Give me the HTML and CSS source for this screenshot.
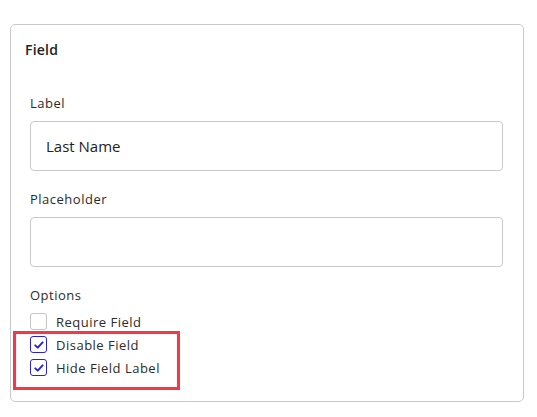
FILE: index.html
```html
<!DOCTYPE html>
<html lang="en">
<head>
<meta charset="utf-8">
<title>Field</title>
<link rel="stylesheet" href="styles.css">
</head>
<body>
<section class="card">
  <h2 class="card-title">Field</h2>
  <div class="card-body">
    <div class="group">
      <label class="group-label">Label</label>
      <div class="input">Last Name</div>
    </div>
    <div class="group">
      <label class="group-label">Placeholder</label>
      <div class="input"></div>
    </div>
    <div class="group options">
      <span class="group-label">Options</span>
      <ul class="checks">
        <li class="check"><span class="box"></span><span>Require Field</span></li>
        <li class="check"><span class="box checked"><svg viewBox="0 0 16 16" width="12" height="12"><path d="M3 8.5 L6.3 11.5 L12.8 4.5" fill="none" stroke="#2a22d6" stroke-width="2.6" stroke-linecap="round" stroke-linejoin="round"/></svg></span><span>Disable Field</span></li>
        <li class="check"><span class="box checked"><svg viewBox="0 0 16 16" width="12" height="12"><path d="M3 8.5 L6.3 11.5 L12.8 4.5" fill="none" stroke="#2a22d6" stroke-width="2.6" stroke-linecap="round" stroke-linejoin="round"/></svg></span><span>Hide Field Label</span></li>
      </ul>
      <div class="highlight"></div>
    </div>
  </div>
</section>
</body>
</html>
```

FILE: styles.css
```css
* { box-sizing: border-box; }
html, body { margin: 0; padding: 0; background: #fff; }
body {
  font-family: "Open Sans", "Liberation Sans", sans-serif;
  color: #2b2b2b;
  padding: 24px 0 0 10px;
}
.card {
  width: 514px;
  height: 378px;
  border: 1px solid #c9c9c9;
  border-radius: 5px;
  padding: 15px 0 0 0;
}
.card-title {
  margin: 0 0 0 14px;
  font-size: 14px;
  line-height: 20px;
  font-weight: 600;
  letter-spacing: 0.2px;
  color: #222;
}
.card-body {
  padding: 34px 20px 0 19px;
  display: flex;
  flex-direction: column;
  gap: 19px;
}
.group { display: flex; flex-direction: column; position: relative; }
.group-label {
  font-size: 13px;
  line-height: 18px;
  font-weight: 500;
  letter-spacing: 0.5px;
  margin-bottom: 9px;
  color: #2b2b2b;
}
.input {
  width: 473px;
  height: 50px;
  border: 1px solid #c9c9c9;
  border-radius: 4px;
  padding: 0 15px;
  display: flex;
  align-items: center;
  font-size: 15px;
  font-weight: 500;
  color: #222;
}
.options .group-label { margin-bottom: 6px; }
.checks { list-style: none; margin: 0; padding: 0; }
.check {
  height: 23px;
  display: flex;
  align-items: center;
  gap: 9px;
  font-size: 13px;
  font-weight: 500;
  letter-spacing: 0.5px;
  color: #2b2b2b;
}
.box {
  width: 17px;
  height: 17px;
  border: 1px solid #c4c4c4;
  border-radius: 3px;
  display: flex;
  align-items: center;
  justify-content: center;
  background: #fff;
}
.box.checked { border: 1.5px solid #2a22d6; }
.highlight {
  position: absolute;
  left: -17px;
  top: 45px;
  width: 167px;
  height: 59px;
  border: 3px solid #f03a4a;
  box-shadow: inset 0 0 2px rgba(0,0,0,0.15);
  pointer-events: none;
}
```
